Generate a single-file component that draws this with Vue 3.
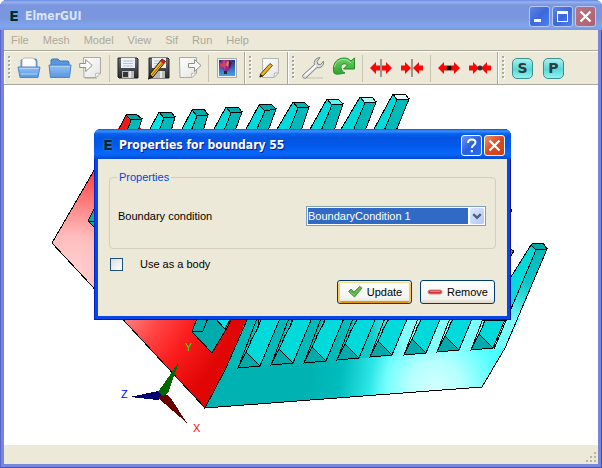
<script setup>
import { ref } from 'vue'

const menus = ['File', 'Mesh', 'Model', 'View', 'Sif', 'Run', 'Help']
const condition = ref('BoundaryCondition 1')
const useAsBody = ref(false)

// Tips of the fins that rise above the dialog: left face, right face, cap
const upperFins = [
  { left: '118,131 126,115 131,120 127,131', right: '127,131 131,120 142,119 138,131', cap: '126,115 136,114 142,119 131,120', tone: '#f01818', top: '#00a4a4' },
  { left: '149,131 159,112 164,118 159,131', right: '159,131 164,118 175,117 171,131', cap: '159,112 171,112 175,117 164,118', tone: '#00e4e4', top: '#00acac' },
  { left: '181,131 192,110 197,116 191,131', right: '191,131 197,116 208,115 203,131', cap: '192,110 204,109 208,115 197,116', tone: '#00dcdc', top: '#00acac' },
  { left: '213,131 226,107 231,113 224,131', right: '224,131 231,113 242,112 235,131', cap: '226,107 238,107 242,112 231,113', tone: '#00dada', top: '#00acac' },
  { left: '245,131 259,105 265,111 256,131', right: '256,131 265,111 276,109 268,131', cap: '259,105 271,104 276,109 265,111', tone: '#00dada', top: '#00acac' },
  { left: '276,131 293,102 298,108 289,131', right: '289,131 298,108 309,107 301,131', cap: '293,102 304,102 309,107 298,108', tone: '#00dada', top: '#00b4b4' },
  { left: '309,131 327,99 332,105 321,131', right: '321,131 332,105 343,104 334,131', cap: '327,99 338,99 343,104 332,105', tone: '#00dada', top: '#58f4f4' },
  { left: '340,131 360,97 365,103 353,131', right: '353,131 365,103 376,102 365,131', cap: '360,97 372,97 376,102 365,103', tone: '#00dada', top: '#b0fcfc' },
  { left: '373,131 393,94 397,100 384,131', right: '384,131 397,100 409,99 396,131', cap: '393,94 405,94 409,99 397,100', tone: '#00dada', top: '#e6ffff' },
]

// Foot of every fin along the base plate
const feet = [
  [246, 352], [279, 349], [312, 347], [345, 344],
  [378, 341], [412, 339], [445, 336], [479, 334],
]
</script>

<template>
  <main class="window">
    <header class="titlebar">
      <span class="app-icon">E</span>
      <h1>ElmerGUI</h1>
      <button class="cap" type="button" aria-label="Minimize">
        <svg viewBox="0 0 21 21"><path d="M5 13h7v3H5z" fill="#fff" /></svg>
      </button>
      <button class="cap" type="button" aria-label="Maximize">
        <svg viewBox="0 0 21 21"><path d="M5 5h11v11H5zM6 8v7h9V8z" fill="#fff" fill-rule="evenodd" /></svg>
      </button>
      <button class="cap cap-close" type="button" aria-label="Close">
        <svg viewBox="0 0 21 21"><path d="M5.500 5.500l10 10M15.500 5.500l-10 10" stroke="#fff" stroke-width="2.200" /></svg>
      </button>
    </header>

    <div class="client">
      <nav class="menubar">
        <button v-for="m in menus" :key="m" type="button" disabled>{{ m }}</button>
      </nav>

      <div class="toolbars">
        <div class="toolbar">
          <i class="grip"></i>
          <button class="tool" type="button" aria-label="Open">
            <svg viewBox="0 0 24 24">
              <path d="M4 14V4h2V3h13l1 2v9z" fill="#5d98de" stroke="#3f76ba" stroke-width=".8" />
              <path d="M5 13V4l2-2h9l3 3v8z" fill="#fbfbfb" stroke="#a9a9a9" stroke-width=".8" />
              <path d="M1 11h22l-2 10.500H3z" fill="url(#folder)" stroke="#4a86cf" />
              <path d="M2.500 12.500h19M4 18h16" stroke="#b4d5f7" />
            </svg>
          </button>
          <button class="tool" type="button" aria-label="Load mesh">
            <svg viewBox="0 0 24 24">
              <path d="M3 11V4l1-1h6l2 2h8l1 1v5z" fill="#5b96dc" stroke="#4179be" />
              <path d="M1 9h22l-1.500 12.500h-19z" fill="url(#folder)" stroke="#4a86cf" />
              <path d="M2.500 10.500h19" stroke="#a8cdf5" />
            </svg>
          </button>
          <button class="tool" type="button" aria-label="Import">
            <svg viewBox="0 0 24 24">
              <path d="M4.500 1.500h17V17L17 21.500H5z" fill="url(#paper)" stroke="#aaa9a4" />
              <path d="M21.500 17l-5 .500.500 4z" fill="#fff" stroke="#aaa9a4" stroke-width=".8" />
              <path d="M.7 7.500h6v-4l6.500 6-6.500 6v-4h-6z" fill="#fafaf8" stroke="#8f8f8b" />
              <path d="M6 22.500h12" stroke="#c7c4b5" />
            </svg>
          </button>
          <i class="rule"></i>
          <button class="tool" type="button" aria-label="Save">
            <svg viewBox="0 0 24 24">
              <path d="M2 2h19l1 1v19H3l-1-1z" fill="url(#disk)" stroke="#222" />
              <path d="M5 2h14v10H5z" fill="#eef2f7" />
              <path d="M7 5h10M7 7.500h10M7 10h10" stroke="#b3c2d4" />
              <path d="M6 15h12v7H6z" fill="#b9babb" />
              <path d="M7 16h5v5H7z" fill="#333538" />
              <path d="M14 15v7" stroke="#e7e7e7" stroke-width="2" />
            </svg>
          </button>
          <button class="tool" type="button" aria-label="Save as">
            <svg viewBox="0 0 24 24">
              <path d="M2 2h19l1 1v19H3l-1-1z" fill="url(#disk)" stroke="#222" />
              <path d="M5 2h14v10H5z" fill="#eef2f7" />
              <path d="M7 5h10M7 7.500h10M7 10h10" stroke="#b3c2d4" />
              <path d="M6 15h12v7H6z" fill="#b9babb" />
              <path d="M14 15v7" stroke="#e7e7e7" stroke-width="2" />
              <path d="M15 3l3.500 2.500L6 21l-4.500 2L3 18z" fill="#f5b81c" stroke="#221a08" />
              <path d="M15 3l3.500 2.500-2 2.500-3.200-2.500z" fill="#e01818" />
              <path d="M3 18l3 3-5 2.500z" fill="#1b1b1b" />
              <path d="M4.500 19.500L15.500 7" stroke="#704a08" stroke-width=".8" />
            </svg>
          </button>
          <button class="tool" type="button" aria-label="Export">
            <svg viewBox="0 0 24 24">
              <path d="M1.500 1.500h17V17L14 21.500H2z" fill="url(#paper)" stroke="#aaa9a4" />
              <path d="M18.500 17l-5 .500.500 4z" fill="#fff" stroke="#aaa9a4" stroke-width=".8" />
              <path d="M10.500 7.500h6v-4l6.500 6-6.500 6v-4h-6z" fill="#fafaf8" stroke="#8f8f8b" />
            </svg>
          </button>
          <i class="rule"></i>
          <button class="tool" type="button" aria-label="Save picture">
            <svg viewBox="0 0 24 24">
              <path d="M2.500 2.500h19v19h-19z" fill="#f6f6f4" stroke="#aaa99f" />
              <path d="M4 4h16v16H4z" fill="url(#sky)" />
              <path d="M5 7l2-3h8l3 3-1 4-5 5h-2l-4-5z" fill="#8c2a8c" />
              <path d="M8 5l2-1 1 5-1 5-3-4z" fill="#c8407a" />
              <path d="M12 5l2 1-1 5-2-2z" fill="#e08a3a" />
              <path d="M5 7l3 1-1 4-2-2z" fill="#e2365b" />
              <path d="M14 4l3 3-3 6z" fill="#30205f" />
              <path d="M9 15h3v3H9z" fill="#38251d" />
            </svg>
          </button>
        </div>

        <div class="toolbar">
          <i class="grip"></i>
          <button class="tool" type="button" aria-label="Edit">
            <svg viewBox="0 0 24 24">
              <path d="M4.500 2.500h16V17l-4.500 4.500H4.500z" fill="url(#paper)" stroke="#b5b4ae" />
              <path d="M20.500 17l-4 0-.500 4.500z" fill="#fff" stroke="#b5b4ae" />
              <path d="M12 7.500l2.500 2L5 20l-3 1 .500-3z" fill="#efb321" stroke="#54400f" stroke-width=".9" />
              <path d="M2.500 18l2.500 2-3.500 1.500z" fill="#222" />
            </svg>
          </button>
        </div>

        <div class="toolbar">
          <i class="grip"></i>
          <button class="tool" type="button" aria-label="Model setup">
            <svg viewBox="0 0 24 24">
              <path d="M5 22h17" stroke="#d0cdbd" stroke-width="1.500" />
              <path d="M2 19L13.500 8.500c-1-3 1-6.500 5.500-7l-3 4 .8 2.700 2.800.5L22.500 5c.8 4.500-2.500 7.500-6.500 6.500L5 22c-2 1-4.500-1-3-3z" fill="#dcdddd" stroke="#808283" />
              <path d="M4 19.500L15 9.500" stroke="#fff" stroke-width="1.500" />
            </svg>
          </button>
          <button class="tool" type="button" aria-label="Reload">
            <svg viewBox="0 0 24 24">
              <path d="M2 17C-.5 8 5 2 12 2c3 0 5 1 7 3l3.500-3v11H11.500l4-4c-3-2.500-7-1-6.500 3 .2 2.500 2 4 4 5C8 18 4 19 2 17z" fill="url(#leaf)" stroke="#258a28" />
              <path d="M2.500 11C3.500 6 7 3.500 12 3.500c3 0 5.500 1.500 7 3.500" fill="none" stroke="#a5e6a0" />
            </svg>
          </button>
          <i class="rule"></i>
          <button class="tool" type="button" aria-label="Divide surface">
            <svg viewBox="0 0 24 24">
              <path d="M12 3v18" stroke="#444" />
              <path d="M1 12l6-6v3.500h4v5H7V18zM23 12l-6-6v3.500h-4v5h4V18z" fill="#fb0606" />
            </svg>
          </button>
          <button class="tool" type="button" aria-label="Unify surface">
            <svg viewBox="0 0 24 24">
              <path d="M12 3v18" stroke="#444" />
              <path d="M11 12L5 6v3.500H1v5h4V18zM13 12l6-6v3.500h4v5h-4V18z" fill="#fb0606" />
            </svg>
          </button>
          <i class="rule"></i>
          <button class="tool" type="button" aria-label="Divide edge">
            <svg viewBox="0 0 24 24">
              <path d="M1 12l6-6v3.500h4v5H7V18zM23 12l-6-6v3.500h-4v5h4V18z" fill="#fb0606" />
              <circle cx="12" cy="12" r="2.500" fill="#0c0c0c" />
            </svg>
          </button>
          <button class="tool" type="button" aria-label="Unify edge">
            <svg viewBox="0 0 24 24">
              <path d="M11 12L5 6v3.500H1v5h4V18zM13 12l6-6v3.500h4v5h-4V18z" fill="#fb0606" />
              <circle cx="12" cy="12" r="2.500" fill="#333" />
            </svg>
          </button>
        </div>

        <div class="toolbar last">
          <i class="grip"></i>
          <button class="tool" type="button"><span class="gem">S</span></button>
          <button class="tool" type="button"><span class="gem">P</span></button>
        </div>
      </div>

      <section class="viewport">
        <svg class="scene" viewBox="4 85 594 360" preserveAspectRatio="xMinYMin meet" shape-rendering="crispEdges" aria-hidden="true">
          <defs>
            <linearGradient id="folder" x1="0" y1="0" x2="0" y2="1">
              <stop offset="0" stop-color="#94c1f2" /><stop offset="1" stop-color="#5797e0" />
            </linearGradient>
            <linearGradient id="paper" x1="0" y1="0" x2="1" y2="1">
              <stop offset="0" stop-color="#fff" /><stop offset="1" stop-color="#e4e4e2" />
            </linearGradient>
            <linearGradient id="disk" x1="0" y1="0" x2="0" y2="1">
              <stop offset="0" stop-color="#6c7076" /><stop offset="1" stop-color="#26272a" />
            </linearGradient>
            <linearGradient id="sky" x1="0" y1="0" x2="0" y2="1">
              <stop offset="0" stop-color="#0c3a86" /><stop offset="1" stop-color="#4aa0ec" />
            </linearGradient>
            <linearGradient id="leaf" x1="0" y1="0" x2="0" y2="1">
              <stop offset="0" stop-color="#6bcf66" /><stop offset="1" stop-color="#2da42e" />
            </linearGradient>
            <radialGradient id="red" gradientUnits="userSpaceOnUse" cx="72" cy="272" r="200">
              <stop offset="0" stop-color="#ffd0d0" /><stop offset=".18" stop-color="#ffbdbd" />
              <stop offset=".36" stop-color="#ff7c7c" /><stop offset=".5" stop-color="#ff4545" />
              <stop offset=".66" stop-color="#fb1c1c" /><stop offset=".85" stop-color="#e00606" />
            </radialGradient>
            <linearGradient id="plate" gradientUnits="userSpaceOnUse" x1="310" y1="360" x2="390" y2="372">
              <stop offset="0" stop-color="#00b2b2" /><stop offset=".4" stop-color="#00bcbc" />
              <stop offset="1" stop-color="#48ffff" />
            </linearGradient>
            <radialGradient id="shine" gradientUnits="userSpaceOnUse" cx="435" cy="388" r="66">
              <stop offset="0" stop-color="#fff" stop-opacity=".76" />
              <stop offset=".4" stop-color="#fff" stop-opacity=".6" />
              <stop offset="1" stop-color="#fff" stop-opacity="0" />
            </radialGradient>
            <linearGradient id="gaps" gradientUnits="userSpaceOnUse" x1="340" y1="340" x2="500" y2="340">
              <stop offset="0" stop-color="#00baba" /><stop offset=".2" stop-color="#10cccc" />
              <stop offset=".4" stop-color="#88ffff" /><stop offset="1" stop-color="#78ffff" />
            </linearGradient>
            <linearGradient id="edge" gradientUnits="userSpaceOnUse" x1="540" y1="250" x2="500" y2="345">
              <stop offset="0" stop-color="#00baba" /><stop offset=".35" stop-color="#0cc8c8" />
              <stop offset=".75" stop-color="#7affff" /><stop offset="1" stop-color="#70ffff" />
            </linearGradient>
          </defs>

          <polygon points="52,243 126,115 200,180 247,320 228,365 205,408" fill="url(#red)" />
          <polyline points="118,129 52,243 205,408 226,368 247,320" class="ink" />
          <polygon points="94,209 88,221 94,227" fill="#00b0b0" class="line" />
          <path d="M88 221h6" class="ink" />

          <polygon points="197,318 192,332 212,353 227,328 232,318" fill="#00abab" class="line" />
          <polyline points="192,332 203,331 208,318" class="ink" />
          <polygon points="215,318 225,329 231,318" fill="#00e6e6" class="line" />

          <polygon points="247,318 520,318 505,348 226,368" fill="url(#gaps)" />
          <polygon points="226,368 505,348 482,387 205,408" fill="url(#plate)" />
          <polygon points="226,368 505,348 482,387 205,408" fill="url(#shine)" />
          <path d="M247 320L226 368L205 408L482 387L505 348" class="ink" />

          <g v-for="[x, y] in feet" :key="x">
            <path :d="`M${x} ${y}L${x + 15} ${y - 36}H${x + 35}L${x + 14} ${y + 14}z`" fill="#00dada" />
            <path :d="`M${x - 8} ${y + 16}L${x + 12} ${y - 36}M${x} ${y}L${x + 17} ${y - 36}M${x + 4} ${y - 10}L${x + 12} ${y - 24}L${x + 12} ${y - 34}M${x + 14} ${y + 14}L${x + 35} ${y - 36}`" class="ink" />
            <path :d="`M${x} ${y}L${x - 8} ${y + 16}L${x + 14} ${y + 14}z`" fill="#00aaaa" class="line" />
          </g>

          <polygon points="531,245 536,250 507,320 484,320" fill="#00dada" class="line" />
          <polygon points="536,250 547,249 505,348 494,349" fill="url(#edge)" />
          <path d="M494 349L536 250L547 249L505 348" class="ink" />
          <polygon points="533,243 543,243 547,249 536,250 531,245" fill="#00a8a8" class="line" />
          <polygon points="507,207 512,210 509,216" fill="#00b0b0" class="line" />
          <polygon points="507,248 514,251 510,257" fill="#00b0b0" class="line" />

          <g v-for="f in upperFins" :key="f.cap">
            <polygon :points="f.left" :fill="f.tone" class="line" />
            <polygon :points="f.right" fill="#00baba" class="line" />
            <polygon :points="f.cap" :fill="f.top" class="line" />
          </g>

          <polygon points="130,397 158,391 163,395 158,400" fill="#000070" />
          <polygon points="187,423 158,398 164,393 170,397" fill="#690000" />
          <polygon points="179,362 158,392 163,396 168,393" fill="#006800" />
          <text x="185" y="351" fill="#00e800">Y</text>
          <text x="121" y="398" fill="#0000ff">Z</text>
          <text x="193" y="432" fill="#ff0000">X</text>
        </svg>

        <form class="dialog" role="dialog" aria-labelledby="dialog-title" @submit.prevent>
          <header class="titlebar active">
            <span class="app-icon">E</span>
            <h2 id="dialog-title">Properties for boundary 55</h2>
            <button class="cap" type="button" aria-label="Help">
              <svg viewBox="0 0 21 21"><path d="M7 8c0-5 7.500-4.500 7.500-.5 0 2.500-3.700 2.500-3.700 5.500M10.800 15v2.200" fill="none" stroke="#fff" stroke-width="2" /></svg>
            </button>
            <button class="cap cap-close" type="button" aria-label="Close">
              <svg viewBox="0 0 21 21"><path d="M5.500 5.500l10 10M15.500 5.500l-10 10" stroke="#fff" stroke-width="2.200" /></svg>
            </button>
          </header>
          <div class="dialog-body">
            <fieldset>
              <legend>Properties</legend>
              <label for="bc">Boundary condition</label>
              <span class="combo">
                <select id="bc" v-model="condition">
                  <option>BoundaryCondition 1</option>
                </select>
                <svg viewBox="0 0 15 16" aria-hidden="true">
                  <path d="M3.500 6l4 4 4-4" fill="none" stroke="#4d6185" stroke-width="2.600" />
                </svg>
              </span>
            </fieldset>
            <div class="check">
              <input id="body" v-model="useAsBody" type="checkbox" />
              <label for="body">Use as a body</label>
            </div>
            <footer>
              <button class="push default" type="submit">
                <svg viewBox="0 0 16 16"><path d="M1.500 7.500L4 5l3 3 5.500-5.500L15 4 7.500 13z" fill="#56ad42" stroke="#4a9a3e" /><path d="M3 7.500l4 3.500 6-7" fill="none" stroke="#86c876" /></svg>
                Update
              </button>
              <button class="push" type="button">
                <svg viewBox="0 0 16 16"><rect x="1" y="6" width="14" height="4" rx="2" fill="#cf3038" stroke="#d88a88" /><path d="M3 7.500h10" stroke="#ee7c7c" /></svg>
                Remove
              </button>
            </footer>
          </div>
        </form>
      </section>

      <footer class="statusbar">
        <svg viewBox="0 0 12 12" aria-hidden="true">
          <path d="M9 1h2v2H9zM5 5h2v2H5zM9 5h2v2H9zM1 9h2v2H1zM5 9h2v2H5zM9 9h2v2H9z" fill="#b8b4a4" />
        </svg>
      </footer>
    </div>
  </main>
</template>

<style>
body {
  margin: 0;
  background: #fff;
}
</style>

<style scoped>
* {
  box-sizing: border-box;
}
.window {
  display: flex;
  flex-direction: column;
  min-height: 100vh;
  overflow: hidden;
  border-radius: 7px 7px 0 0;
  background: #7586dc;
  box-shadow: inset 1px 0 #5c64cc, inset -1px 0 #4a50b4, inset 0 -1px #4a50b4;
  font: 11px/14px "Liberation Sans", Arial, sans-serif;
  color: #000;
}
button,
select {
  font: inherit;
  color: inherit;
  margin: 0;
}
.titlebar {
  display: flex;
  align-items: center;
  gap: 2px;
  height: 30px;
  padding: 2px 6px 0 7px;
  background: linear-gradient(#6488e2 0, #98b2ee 2px, #7a96df 5px, #7a96df 18px, #80a6ec 26px, #7b98e2 30px);
  color: #d8e4f8;
}
.titlebar h1,
.titlebar h2 {
  flex: 1;
  margin: 0 0 0 2px;
  font: bold 12px/16px "DejaVu Sans Condensed", "DejaVu Sans", sans-serif;
  white-space: nowrap;
}
.app-icon {
  width: 14px;
  text-align: center;
  font: bold 14px/16px "DejaVu Sans", sans-serif;
  color: #14202c;
  text-shadow: 0 0 3px #20d0e0;
}
.cap {
  flex: none;
  width: 21px;
  height: 21px;
  padding: 0;
  border: 1px solid #b8c8f0;
  border-radius: 3px;
  background: linear-gradient(135deg, #5c84e4, #3c68dc 50%, #4a80f0);
}
.cap svg {
  display: block;
  width: 21px;
  height: 21px;
  margin: -1px;
}
.cap-close {
  background: linear-gradient(135deg, #bb7384, #b06070);
}
.client {
  flex: 1;
  display: flex;
  flex-direction: column;
  margin: 0 4px 4px;
  background: #ece9d8;
}
.menubar {
  display: flex;
  height: 21px;
  border-bottom: 1px solid #aca899;
}
.menubar button {
  padding: 0 7px;
  border: 0;
  background: none;
  color: #aca899;
}
.toolbars {
  display: flex;
  height: 34px;
  border-top: 1px solid #fff;
  border-bottom: 1px solid #aca899;
}
.toolbar {
  display: flex;
  align-items: center;
  padding: 0 2px 0 3px;
  border-left: 1px solid #fff;
  border-right: 1px solid #aca899;
}
.toolbar.last {
  flex: 1;
  border-right: 0;
}
.grip {
  width: 3px;
  height: 24px;
  margin-right: 2px;
  background: linear-gradient(#aca899 2px, transparent 2px) 0 0 / 2px 4px repeat-y,
    linear-gradient(#fff 2px, transparent 2px) 1px 1px / 2px 4px repeat-y;
}
.rule {
  width: 6px;
  height: 27px;
  background: linear-gradient(#c8c4b0, #c8c4b0) 3px 0 / 1px 100% no-repeat;
}
.tool {
  display: grid;
  place-items: center;
  width: 31px;
  height: 30px;
  padding: 0;
  border: 0;
  background: none;
}
.tool svg {
  width: 24px;
  height: 24px;
}
.gem {
  width: 21px;
  height: 21px;
  border: 1px solid #3d8f8f;
  border-radius: 5px;
  background: linear-gradient(#a8f0ee, #58d8d8 55%, #90f4f2);
  font: bold 14px/19px "DejaVu Sans", sans-serif;
  color: #2c3c40;
  text-align: center;
}
.viewport {
  position: relative;
  flex: 1;
  min-height: 360px;
  background: #fff;
}
.scene {
  display: block;
  width: 100%;
  height: 360px;
}
.scene text {
  font: 11px "Liberation Sans", Arial, sans-serif;
}
.ink {
  fill: none;
  stroke: #000;
}
.line {
  stroke: #000;
}
.dialog {
  position: absolute;
  left: 90px;
  top: 44px;
  width: 417px;
  padding: 0 4px 4px;
  border-radius: 7px 7px 0 0;
  background: #0a46e4;
  box-shadow: inset 1px 0 #0020c8, inset -1px 0 #0018a0, inset 0 -1px #0018a0;
}
.active {
  margin: 0 -4px;
  border-radius: 7px 7px 0 0;
  background: linear-gradient(#0a50e0 0, #3a92ff 2px, #0560ec 5px, #0354e0 9px, #0459ec 17px, #0668fc 25px, #0449d0 30px);
  color: #fff;
  text-shadow: 1px 1px #0a1f8c;
}
.active .app-icon {
  text-shadow: 0 0 3px #20a0e8;
}
.active .cap {
  border-color: #fff;
  background: linear-gradient(135deg, #6c94f0, #2a60dc 50%, #2a6cf0);
}
.active .cap-close {
  background: linear-gradient(135deg, #f0906c, #dc4820 50%, #d04010);
}
.dialog-body {
  padding: 11px 11px 12px;
  background: #ece9d8;
}
fieldset {
  display: flex;
  align-items: center;
  justify-content: space-between;
  height: 79px;
  margin: 0;
  padding: 0 9px 0 8px;
  border: 1px solid #d0d0bf;
  border-radius: 4px;
}
legend {
  margin-left: -1px;
  padding: 0 2px;
  color: #0046d5;
}
.combo {
  position: relative;
  display: block;
  width: 180px;
}
.combo select {
  display: block;
  width: 100%;
  height: 20px;
  padding: 0 18px 0 1px;
  border: 1px solid #7f9db9;
  border-radius: 0;
  appearance: none;
  background: linear-gradient(#316ac5, #316ac5) 1px 1px / calc(100% - 18px) calc(100% - 2px) no-repeat #fff;
  color: #fff;
}
.combo svg {
  position: absolute;
  right: 2px;
  top: 2px;
  width: 14px;
  height: 16px;
  border-radius: 2px;
  background: linear-gradient(135deg, #dce6fe, #b4c8f6);
  pointer-events: none;
}
.check {
  display: flex;
  align-items: center;
  gap: 17px;
  margin-top: 8px;
  padding-left: 1px;
}
.check input {
  width: 13px;
  height: 13px;
  margin: 0;
  border: 1px solid #1c5180;
  appearance: none;
  background: linear-gradient(135deg, #dcdcd7, #fff);
}
.check input:checked {
  background: #21a121;
}
.dialog footer {
  display: flex;
  justify-content: flex-end;
  gap: 8px;
  margin-top: 9px;
  padding-right: 1px;
}
.push {
  display: flex;
  align-items: center;
  justify-content: center;
  gap: 4px;
  width: 75px;
  height: 24px;
  padding: 0;
  border: 1px solid #003c74;
  border-radius: 3px;
  background: linear-gradient(#fff, #f3f3ee 80%, #dcd8ca);
}
.push svg {
  width: 16px;
  height: 16px;
}
.default {
  box-shadow: inset 0 1px #fff0cf, inset 0 2px #fdd889, inset 2px 0 #fbc761, inset -2px 0 #fbc761, inset 0 -2px #e59700;
}
.statusbar {
  display: flex;
  align-items: flex-end;
  justify-content: flex-end;
  height: 19px;
  padding: 0 1px 1px 0;
}
.statusbar svg {
  width: 12px;
  height: 12px;
}
</style>
